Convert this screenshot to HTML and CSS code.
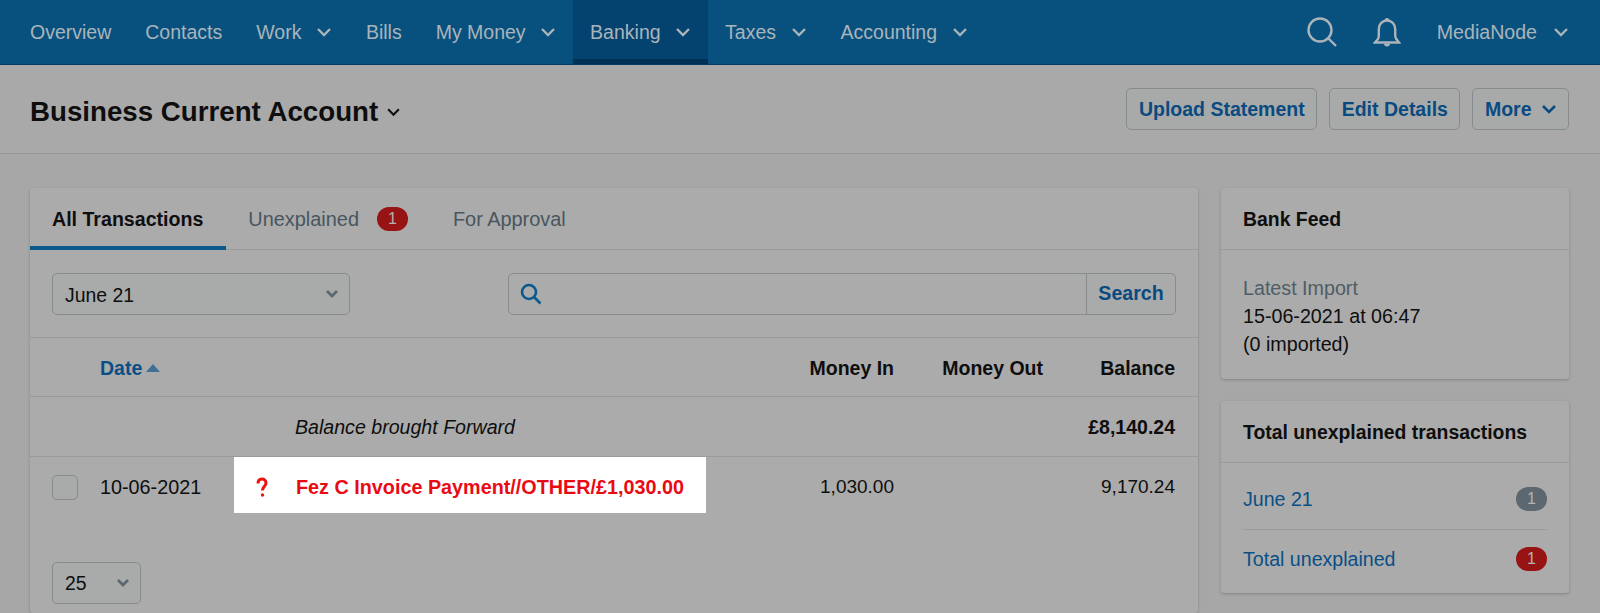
FILE: index.html
```html
<!DOCTYPE html>
<html lang="en">
<head>
<meta charset="utf-8">
<title>Business Current Account</title>
<link rel="stylesheet" href="styles.css">
</head>
<body>
<header class="topbar">
  <nav class="nav">
    <a class="nav-item">Overview</a>
    <a class="nav-item">Contacts</a>
    <a class="nav-item">Work<svg class="chev" viewBox="0 0 16 10"><path d="M2 2l6 6 6-6"/></svg></a>
    <a class="nav-item">Bills</a>
    <a class="nav-item">My Money<svg class="chev" viewBox="0 0 16 10"><path d="M2 2l6 6 6-6"/></svg></a>
    <a class="nav-item active">Banking<svg class="chev" viewBox="0 0 16 10"><path d="M2 2l6 6 6-6"/></svg></a>
    <a class="nav-item">Taxes<svg class="chev" viewBox="0 0 16 10"><path d="M2 2l6 6 6-6"/></svg></a>
    <a class="nav-item">Accounting<svg class="chev" viewBox="0 0 16 10"><path d="M2 2l6 6 6-6"/></svg></a>
  </nav>
  <div class="top-right">
    <svg class="icon-search" viewBox="0 0 30 30"><circle cx="13" cy="13" r="11.5"/><path d="M21.5 21.5l7.5 7.5"/></svg>
    <svg class="icon-bell" viewBox="0 0 28 31"><path d="M2 25.5h24l-3-4c-.6-1-.8-2-.8-3.500v-6C22.200 7 18.500 3.500 14 3.500S5.800 7 5.800 12v6.500c0 1.500-.2 2.500-.8 3.500z"/><path class="fill" d="M11.500 3.500a2.500 2.500 0 0 1 5 0zM11 26.500h6a3 3 0 0 1-6 0z"/></svg>
    <a class="user">MediaNode<svg class="chev" viewBox="0 0 16 10"><path d="M2 2l6 6 6-6"/></svg></a>
  </div>
</header>

<section class="subbar">
  <h1 class="title">Business Current Account<svg class="title-chev" viewBox="0 0 14 9"><path d="M2 2l5 5 5-5"/></svg></h1>
  <div class="actions">
    <button class="btn">Upload Statement</button>
    <button class="btn">Edit Details</button>
    <button class="btn">More<svg class="btn-chev" viewBox="0 0 16 10"><path d="M2 2l6 6 6-6"/></svg></button>
  </div>
</section>

<main class="content">
  <section class="card main-card">
    <div class="tabs">
      <a class="tab current">All Transactions</a>
      <a class="tab">Unexplained<span class="badge red tab-badge">1</span></a>
      <a class="tab">For Approval</a>
    </div>
    <div class="filters">
      <div class="select month"><span>June 21</span><svg class="sel-chev" viewBox="0 0 14 10"><path d="M2 2l5 5 5-5"/></svg></div>
      <div class="search">
        <svg class="search-glyph" viewBox="0 0 22 22"><circle cx="9" cy="9" r="7"/><path d="M14 14l6.500 6.500"/></svg>
        <button class="search-btn">Search</button>
      </div>
    </div>
    <div class="row head">
      <span class="c-check"></span>
      <span class="c-date sort">Date<i class="caret"></i></span>
      <span class="c-desc"></span>
      <span class="c-in">Money In</span>
      <span class="c-out">Money Out</span>
      <span class="c-bal">Balance</span>
    </div>
    <div class="row forward">
      <span class="c-check"></span>
      <span class="c-date"></span>
      <span class="c-desc"><em>Balance brought Forward</em></span>
      <span class="c-in"></span>
      <span class="c-out"></span>
      <span class="c-bal"><strong>£8,140.24</strong></span>
    </div>
    <div class="row tx">
      <span class="c-check"><i class="checkbox"></i></span>
      <span class="c-date">10-06-2021</span>
      <span class="c-desc highlight">
        <svg class="q" viewBox="0 0 12 20"><path d="M2 6.500C2 3.500 3.800 2 6 2s4 1.500 4 4c0 3-3.500 3.500-3.500 7.500" /><circle cx="6.500" cy="18" r="1.700"/></svg>
        <b>Fez C Invoice Payment//OTHER/£1,030.00</b>
      </span>
      <span class="c-in">1,030.00</span>
      <span class="c-out"></span>
      <span class="c-bal">9,170.24</span>
    </div>
    <div class="pager">
      <div class="select per-page"><span>25</span><svg class="sel-chev" viewBox="0 0 14 10"><path d="M2 2l5 5 5-5"/></svg></div>
    </div>
  </section>

  <aside class="side">
    <section class="card feed">
      <h2 class="card-title">Bank Feed</h2>
      <div class="feed-body">
        <div class="muted">Latest Import</div>
        <div>15-06-2021 at 06:47</div>
        <div>(0 imported)</div>
      </div>
    </section>
    <section class="card totals">
      <h2 class="card-title">Total unexplained transactions</h2>
      <div class="total-list">
        <div class="total-row"><a>June 21</a><span class="badge grey">1</span></div>
        <div class="total-row"><a>Total unexplained</a><span class="badge red">1</span></div>
      </div>
    </section>
  </aside>
</main>
</body>
</html>
```

FILE: styles.css
```css
* { box-sizing: border-box; }
html, body { margin: 0; height: 613px; overflow: hidden; }
body {
  background: #a7a7a7;
  color: #0e0e0e;
  font-family: "Liberation Sans", Arial, sans-serif;
  font-size: 19.800px;
  line-height: 28px;
}
svg { display: block; fill: none; }

.topbar {
  height: 65px;
  background: #08517f;
  border-bottom: 1px solid #033a66;
  display: flex;
  justify-content: space-between;
  padding: 0 31px 0 13px;
  color: #aab4ba;
  font-size: 19.500px;
}
.nav { display: flex; }
.nav-item {
  display: flex;
  align-items: center;
  gap: 14.500px;
  padding: 0 17px;
  height: 64px;
}
.nav-item.active {
  background: #04436f;
  border-bottom: 5px solid #022f55;
  padding-top: 5px;
}
.chev { width: 16px; height: 10px; }
.chev path, .btn-chev path { stroke-width: 2.400; }
.chev path { stroke: #aab4ba; }
.top-right { display: flex; align-items: center; }
.icon-search { width: 30px; height: 30px; margin-right: 36px; }
.icon-search circle, .icon-search path, .icon-bell path { stroke: #aab4ba; stroke-width: 2.400; }
.icon-bell { width: 28px; height: 31px; margin-right: 36px; }
.icon-bell .fill { fill: #aab4ba; stroke: none; }
.user { display: flex; align-items: center; gap: 16px; font-size: 19.600px; }

.subbar {
  height: 89px;
  background: #a9a9a9;
  border-bottom: 1px solid #969696;
  display: flex;
  align-items: center;
  justify-content: space-between;
  padding: 0 31px 0 30px;
}
.title {
  margin: 0;
  display: flex;
  align-items: center;
  gap: 8px;
  font-size: 27.700px;
  line-height: 34px;
  font-weight: 700;
  padding-top: 5px;
}
.title-chev { width: 15px; height: 10px; }
.title-chev path { stroke: #0e0e0e; stroke-width: 2; }
.actions { display: flex; gap: 12px; }
.btn {
  height: 42px;
  padding: 0 11.500px;
  display: flex;
  align-items: center;
  gap: 9px;
  font: 700 19.500px "Liberation Sans", Arial, sans-serif;
  color: #0a4a80;
  background: #a8aaaa;
  border: 1px solid #868b8d;
  border-radius: 5px;
}
.btn-chev { width: 16px; height: 10px; }
.btn-chev path { stroke: #0a4a80; stroke-width: 2.600; }

.content {
  display: flex;
  gap: 23px;
  padding: 34px 31px 0 30px;
  align-items: flex-start;
}
.card {
  background: #ababab;
  border-radius: 3px;
  box-shadow: 0 1px 3px rgba(0, 0, 0, .22);
}
.main-card { width: 1168px; height: 425px; }

.tabs { height: 62px; display: flex; border-bottom: 1px solid #989c9d; }
.tab {
  height: 62px;
  display: flex;
  align-items: center;
  padding: 0 23px 0 22px;
  color: #48565f;
  font-size: 19.900px;
}
.tab.current {
  font-weight: 700;
  font-size: 19.600px;
  color: #0e0e0e;
  border-bottom: 4px solid #0a5a8e;
  padding-top: 3px;
}
.tab-badge { margin-left: 18px; }

.badge {
  width: 31px;
  height: 24px;
  border-radius: 12px;
  display: flex;
  align-items: center;
  justify-content: center;
  font-size: 16px;
  color: #b2b2b2;
}
.red { background: #981313; }
.grey { background: #5c676f; }

.filters {
  height: 88px;
  display: flex;
  align-items: center;
  justify-content: space-between;
  padding: 0 22px;
  border-bottom: 1px solid #989c9d;
}
.select {
  height: 42px;
  display: flex;
  align-items: center;
  justify-content: space-between;
  padding: 0 10px 0 12px;
  background: #a9abab;
  border: 1px solid #868b8d;
  border-radius: 5px;
  font-size: 19.400px;
}
.month { width: 298px; padding-top: 3px; }
.month .sel-chev { margin-top: -3px; }
.per-page { width: 89px; }
.sel-chev { width: 14px; height: 10px; }
.sel-chev path { stroke: #5c676f; stroke-width: 2.800; }
.search {
  width: 668px;
  height: 42px;
  display: flex;
  align-items: center;
  justify-content: space-between;
  border: 1px solid #868b8d;
  border-radius: 5px;
  padding-left: 11px;
}
.search-glyph { width: 22px; height: 22px; }
.search-glyph circle, .search-glyph path { stroke: #0a5a8e; stroke-width: 2.600; }
.search-btn {
  width: 89px;
  height: 40px;
  background: #a9abab;
  border: 0;
  border-left: 1px solid #868b8d;
  border-radius: 0 5px 5px 0;
  color: #0a4a80;
  font: 700 19.600px "Liberation Sans", Arial, sans-serif;
}

.row {
  display: grid;
  grid-template-columns: 70px 134px 472px 188px 149px 132px;
  align-items: center;
  padding: 0 23px 0 0;
}
.row > .c-check { padding-left: 22px; }
.c-in, .c-out, .c-bal { text-align: right; }
.head {
  height: 59px;
  font-weight: 700;
  font-size: 19.500px;
  padding-top: 2px;
  border-bottom: 1px solid #989c9d;
}
.head .sort { color: #0a4f85; display: flex; align-items: center; gap: 4px; }
.caret {
  width: 0;
  height: 0;
  border-left: 7px solid transparent;
  border-right: 7px solid transparent;
  border-bottom: 8px solid #3f6f94;
}
.forward { height: 60px; border-bottom: 1px solid #989c9d; }
.forward .c-desc { padding-left: 61px; font-size: 19.600px; }
.forward strong { font-size: 19.500px; }
.tx { height: 56px; }
.c-desc { display: block; }
.tx > span { padding-top: 4px; }
.tx > .c-in, .tx > .c-bal { font-size: 19px; }
.tx > .c-desc { height: 56px; padding-top: 4px; }
.highlight {
  display: flex;
  align-items: center;
  gap: 28px;
  background: #fff;
  color: #e90b14;
  padding-left: 22px;
  width: 472px;
}
.q { width: 12px; height: 20px; flex: none; }
.q path { stroke: #ee1111; stroke-width: 3; }
.q circle { fill: #ee1111; }
.checkbox {
  display: block;
  width: 26px;
  height: 25px;
  background: #a9abab;
  border: 1px solid #868b8d;
  border-radius: 5px;
}
.pager { padding: 49px 22px 0; }

.side { width: 348px; display: flex; flex-direction: column; gap: 22px; }
.card-title {
  margin: 0;
  height: 62px;
  display: flex;
  align-items: center;
  padding: 0 22px;
  font-size: 19.400px;
  font-weight: 700;
  border-bottom: 1px solid #989c9d;
}
.feed { height: 191px; }
.feed-body { padding: 24px 22px 0; font-size: 19.700px; }
.muted { color: #4e5d66; }
.totals { height: 192px; }
.total-list { padding: 0 22px; }
.total-row {
  height: 66px;
  padding-top: 6px;
  display: flex;
  align-items: center;
  justify-content: space-between;
  color: #0a4f85;
  font-size: 19.600px;
}
.total-row + .total-row { border-top: 1px solid #989c9d; height: 59px; padding-top: 0; }
```
